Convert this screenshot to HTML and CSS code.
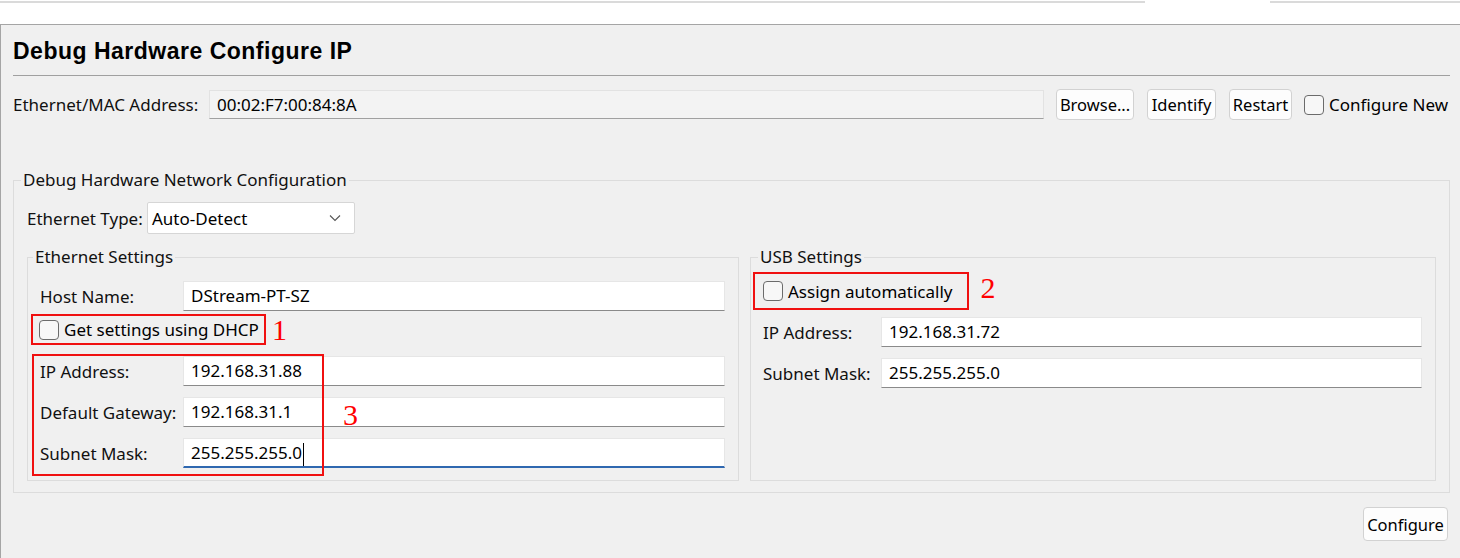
FILE: index.html
```html
<!DOCTYPE html>
<html lang="en">
<head>
    <meta charset="UTF-8">
    <title>Debug Hardware Configure IP</title>
    <link rel="stylesheet" href="styles.css">
</head>
<body>
    <div class="tabbar">
        <div class="tab-line"></div>
        <div class="tab-gap"></div>
        <div class="tab-line tab-line-end"></div>
    </div>

    <div class="view">
        <h1 class="title">Debug Hardware Configure IP</h1>

        <div class="mac-row">
            <span class="label">Ethernet/MAC Address:</span>
            <div class="field readonly">00:02:F7:00:84:8A</div>
            <button class="btn browse">Browse...</button>
            <button class="btn identify">Identify</button>
            <button class="btn restart">Restart</button>
            <label class="check">
                <span class="box"></span>
                Configure New
            </label>
        </div>

        <fieldset class="group outer">
            <legend>Debug Hardware Network Configuration</legend>

            <div class="type-row">
                <span class="label">Ethernet Type:</span>
                <div class="select">
                    <span>Auto-Detect</span>
                    <svg width="12" height="8" viewBox="0 0 12 8"><path d="M1 1.5l5 5 5-5" fill="none" stroke="#555" stroke-width="1.1"/></svg>
                </div>
            </div>

            <div class="settings">
                <fieldset class="group eth">
                    <legend>Ethernet Settings</legend>
                    <div class="row">
                        <span class="label w-eth">Host Name:</span>
                        <div class="field">DStream-PT-SZ</div>
                    </div>
                    <div class="check-row dhcp">
                        <label class="check marked">
                            <span class="box"></span>
                            Get settings using DHCP
                        </label>
                        <span class="num">1</span>
                    </div>
                    <div class="ip-rows">
                        <div class="row">
                            <span class="label w-eth">IP Address:</span>
                            <div class="field">192.168.31.88</div>
                        </div>
                        <div class="row">
                            <span class="label w-eth">Default Gateway:</span>
                            <div class="field">192.168.31.1</div>
                        </div>
                        <div class="row">
                            <span class="label w-eth">Subnet Mask:</span>
                            <div class="field focus">255.255.255.0<span class="caret"></span></div>
                        </div>
                        <span class="mark-box"></span>
                        <span class="num num-3">3</span>
                    </div>
                </fieldset>

                <fieldset class="group usb">
                    <legend>USB Settings</legend>
                    <div class="check-row auto">
                        <label class="check marked">
                            <span class="box"></span>
                            Assign automatically
                        </label>
                        <span class="num">2</span>
                    </div>
                    <div class="row">
                        <span class="label w-usb">IP Address:</span>
                        <div class="field">192.168.31.72</div>
                    </div>
                    <div class="row">
                        <span class="label w-usb">Subnet Mask:</span>
                        <div class="field">255.255.255.0</div>
                    </div>
                </fieldset>
            </div>
        </fieldset>

        <div class="footer">
            <button class="btn configure">Configure</button>
        </div>
    </div>
</body>
</html>
```

FILE: styles.css
```css
* {
    box-sizing: border-box;
    margin: 0;
    padding: 0;
}

body {
    background: #fff;
    font-family: 'Noto Sans', 'Segoe UI', sans-serif;
    font-size: 17px;
    color: #111;
    height: 558px;
    overflow: hidden;
}

/* tab strip at the top */
.tabbar {
    display: flex;
    height: 24px;
    padding-top: 1px;
}

.tab-line {
    flex: 1;
    height: 2px;
    background: #dadada;
}

.tab-gap {
    width: 125px;
}

.tab-line-end {
    flex: none;
    width: 190px;
}

.view {
    height: 534px;
    background: #f0f0f0;
    border-top: 1px solid #a5a5a5;
    border-left: 1px solid #a5a5a5;
    padding: 0 10px 0 12px;
}

.title {
    font-family: 'Liberation Sans', Arial, sans-serif;
    font-size: 23px;
    letter-spacing: 0.5px;
    font-weight: bold;
    color: #000;
    line-height: 26px;
    padding-top: 13px;
    padding-bottom: 11px;
    border-bottom: 1px solid #a0a0a0;
}

.label {
    white-space: nowrap;
    color: #111;
}

/* mac address row */
.mac-row {
    display: flex;
    align-items: center;
    margin-top: 13px;
    height: 31px;
    padding-right: 2px;
}

.mac-row .label {
    width: 196px;
}

.field {
    flex: 1;
    height: 30px;
    line-height: 28px;
    padding: 0 7px;
    background: #fff;
    border: 1px solid #e6e6e6;
    border-bottom-color: #8a8a8a;
    color: #000;
    white-space: nowrap;
}

.field.readonly {
    height: 29px;
    line-height: 27px;
    background: #f3f3f3;
    border-color: #e2e2e2;
    border-bottom-color: #a0a0a0;
    margin-right: 12px;
}

.field.focus {
    border-bottom: 2px solid #2f68b0;
}

.caret {
    display: inline-block;
    width: 1px;
    height: 23px;
    background: #000;
    vertical-align: middle;
    margin-left: 1px;
}

.btn {
    font: inherit;
    font-size: 16.5px;
    color: #000;
    height: 31px;
    padding: 0;
    background: #fdfdfd;
    border: 1px solid #d2d2d2;
    border-radius: 4px;
    margin-right: 13px;
    white-space: nowrap;
}

.browse {
    width: 78px;
}

.identify {
    width: 69px;
}

.restart {
    width: 63px;
    margin-right: 12px;
}

.check {
    display: inline-flex;
    align-items: center;
    gap: 5px;
    white-space: nowrap;
    color: #000;
}

.box {
    width: 20px;
    height: 20px;
    border: 1px solid #6b6b6b;
    border-radius: 4px;
    background: #f7f7f7;
}

/* group boxes */
.group {
    border: 1px solid #dcdcdc;
    min-width: 0;
}

.group legend {
    line-height: 22px;
    padding: 0 2px;
    color: #111;
}

.outer {
    margin-top: 49px;
    padding: 0 13px 11px;
}

.outer > legend {
    margin-left: -6px;
}

.type-row {
    display: flex;
    align-items: center;
    margin-top: 11px;
}

.type-row .label {
    width: 120px;
}

.select {
    width: 208px;
    height: 32px;
    display: flex;
    align-items: center;
    justify-content: space-between;
    padding: 0 13px 0 4px;
    background: #fff;
    border: 1px solid #d6d6d6;
    border-radius: 2px;
    color: #000;
}

.settings {
    display: flex;
    gap: 11px;
    margin-top: 12px;
}

.eth {
    width: 712px;
    padding: 0 13px 12px 12px;
}

.usb {
    flex: 1;
    padding: 0 13px 12px 12px;
}

.eth legend {
    margin-left: -7px;
}

.usb legend {
    margin-left: -5px;
}

.row {
    display: flex;
    align-items: center;
}

.w-eth {
    width: 143px;
}

.w-usb {
    width: 118px;
}

.eth > .row {
    margin-top: 13px;
}

.ip-rows {
    position: relative;
    margin-top: 11px;
}

.ip-rows .row + .row {
    margin-top: 11px;
}

.check-row {
    display: flex;
    align-items: center;
}

.marked {
    border: 2px solid #f01010;
    padding: 0 5px 0 6px;
}

.dhcp {
    margin-top: 3px;
    margin-left: -9px;
}

.dhcp .marked {
    height: 31px;
}

.auto {
    margin-top: 4px;
    margin-left: -10px;
    margin-bottom: 6px;
}

.auto .marked {
    height: 38px;
    padding-left: 8px;
    padding-right: 15px;
}

.num {
    font-family: 'Liberation Serif', 'DejaVu Serif', serif;
    font-size: 30px;
    color: #f00;
    margin-left: 6px;
    line-height: 1;
}

.auto .num {
    margin-left: 11px;
    margin-top: -7px;
}

.mark-box {
    position: absolute;
    left: -8px;
    top: -2px;
    width: 292px;
    height: 122px;
    border: 2px solid #f01010;
}

.num-3 {
    position: absolute;
    left: 303px;
    top: 44px;
    margin: 0;
}

.usb > .row {
    margin-top: 7px;
}

.usb > .row + .row {
    margin-top: 11px;
}

.footer {
    display: flex;
    justify-content: flex-end;
    margin-top: 14px;
    padding-right: 2px;
}

.btn.configure {
    width: 85px;
    height: 34px;
    margin-right: 0;
}
```
